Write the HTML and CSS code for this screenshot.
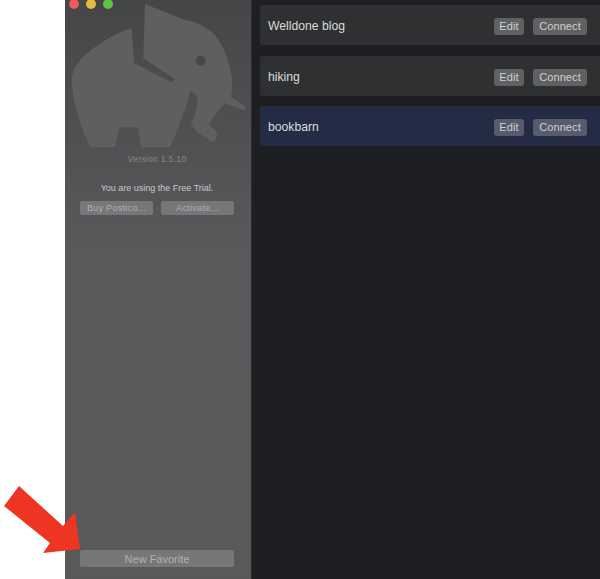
FILE: index.html
```html
<!DOCTYPE html>
<html lang="en">
<head>
<meta charset="utf-8">
<title>Postico</title>
<link rel="stylesheet" href="styles.css">
</head>
<body>
<div class="page">
  <div class="gutter"></div>
  <aside class="sidebar">
    <div class="lights">
      <span class="light red"></span>
      <span class="light yellow"></span>
      <span class="light green"></span>
    </div>
    <svg class="logo" viewBox="15 27 561 423" aria-hidden="true">
      <path class="logo-body" d="M255,12 L375,60 Q470,75 500,170 Q525,240 513,292 L557,320 L552,331 L495,310 Q465,340 448,372 L473,402 L462,428 Q400,395 393,368 Q418,320 412,290 L392,270 Q375,340 330,442 L243,442 L233,382 L178,382 L165,442 L90,442 Q35,320 35,235 Q40,190 100,145 Q160,100 215,85 L222,190 L335,247 L345,238 L250,175 Z"/>
      <circle class="logo-eye" cx="422" cy="182" r="15"/>
    </svg>
    <p class="version">Version 1.5.10</p>
    <p class="trial">You are using the Free Trial.</p>
    <div class="trial-actions">
      <button class="side-btn">Buy Postico...</button>
      <button class="side-btn">Activate...</button>
    </div>
    <button class="side-btn new-favorite">New Favorite</button>
  </aside>
  <main class="favorites">
    <div class="favorite">
      <span class="fav-name">Welldone blog</span>
      <button class="fav-btn edit">Edit</button>
      <button class="fav-btn connect">Connect</button>
    </div>
    <div class="favorite">
      <span class="fav-name">hiking</span>
      <button class="fav-btn edit">Edit</button>
      <button class="fav-btn connect">Connect</button>
    </div>
    <div class="favorite selected">
      <span class="fav-name">bookbarn</span>
      <button class="fav-btn edit">Edit</button>
      <button class="fav-btn connect">Connect</button>
    </div>
  </main>
  <svg class="arrow" viewBox="0 0 90 80" aria-hidden="true">
    <polygon points="19,16 4,36 50,73 43,83 80,79 75,42 63,56"/>
  </svg>
</div>
</body>
</html>
```
FILE: styles.css
```css
* { box-sizing: border-box; }
html, body { margin: 0; padding: 0; }
body {
  background: #fff;
  font-family: "Liberation Sans", sans-serif;
}
.page {
  position: relative;
  display: flex;
  width: 600px;
  height: 579px;
  overflow: hidden;
}
.gutter { width: 65px; flex: none; background: #fff; }
.sidebar {
  width: 186px;
  flex: none;
  display: flex;
  flex-direction: column;
  align-items: center;
  padding-right: 2px;
  background: linear-gradient(#454648, #5a5a5c 45%, #59595a);
}
.lights {
  align-self: flex-start;
  display: flex;
  gap: 7px;
  height: 9px;
  margin-left: 4px;
  align-items: flex-end;
}
.light { width: 10px; height: 10px; border-radius: 50%; flex: none; }
.red { background: #f25c56; }
.yellow { background: #e3bb40; }
.green { background: #5fc346; }
.logo {
  display: block;
  align-self: flex-start;
  width: 187px;
  height: 141px;
  flex: none;
  overflow: visible;
}
.logo-body { fill: #5e5f61; }
.logo-eye { fill: #47484a; }
.version {
  margin: 3px 0 0;
  font-size: 8.8px;
  line-height: 13px;
  letter-spacing: 0.2px;
  color: #858688;
}
.trial {
  margin: 16px 0 0;
  font-size: 9px;
  line-height: 12px;
  color: #c9c9ca;
}
.trial-actions {
  display: flex;
  gap: 8px;
  margin-top: 7px;
}
.side-btn {
  width: 73px;
  height: 14px;
  padding: 0;
  border: 0;
  border-radius: 2px;
  background: #767779;
  color: #b0b1b2;
  font-family: inherit;
  font-size: 9px;
  letter-spacing: 0.3px;
}
.new-favorite {
  width: 154px;
  height: 17px;
  margin-top: auto;
  margin-bottom: 12px;
  font-size: 11px;
  letter-spacing: 0;
}
.favorites {
  flex: 1;
  display: flex;
  flex-direction: column;
  padding: 5px 0 0 8px;
  background: #1e1f23;
  border-left: 1px solid #2b2c2f;
}
.favorite {
  display: flex;
  align-items: center;
  gap: 9px;
  height: 40px;
  margin-bottom: 10.5px;
  padding: 3px 13px 0 8px;
  background: #2f3032;
  border-radius: 3px 0 0 3px;
}
.favorite.selected { background: #232c44; }
.fav-name {
  flex: 1;
  margin-top: -1px;
  font-size: 12.2px;
  color: #dcdcdd;
}
.fav-btn {
  height: 17px;
  padding: 0 0 1px;
  border: 0;
  border-radius: 3px;
  background: #606163;
  color: #d0d0d1;
  font-family: inherit;
  font-size: 11px;
  letter-spacing: 0.1px;
}
.selected .fav-btn { background: #565b6e; }
.edit { width: 30px; }
.connect { width: 54px; }
.arrow {
  position: absolute;
  left: 0;
  top: 470px;
  width: 90px;
  height: 80px;
  overflow: visible;
  fill: #ee3524;
}
```
